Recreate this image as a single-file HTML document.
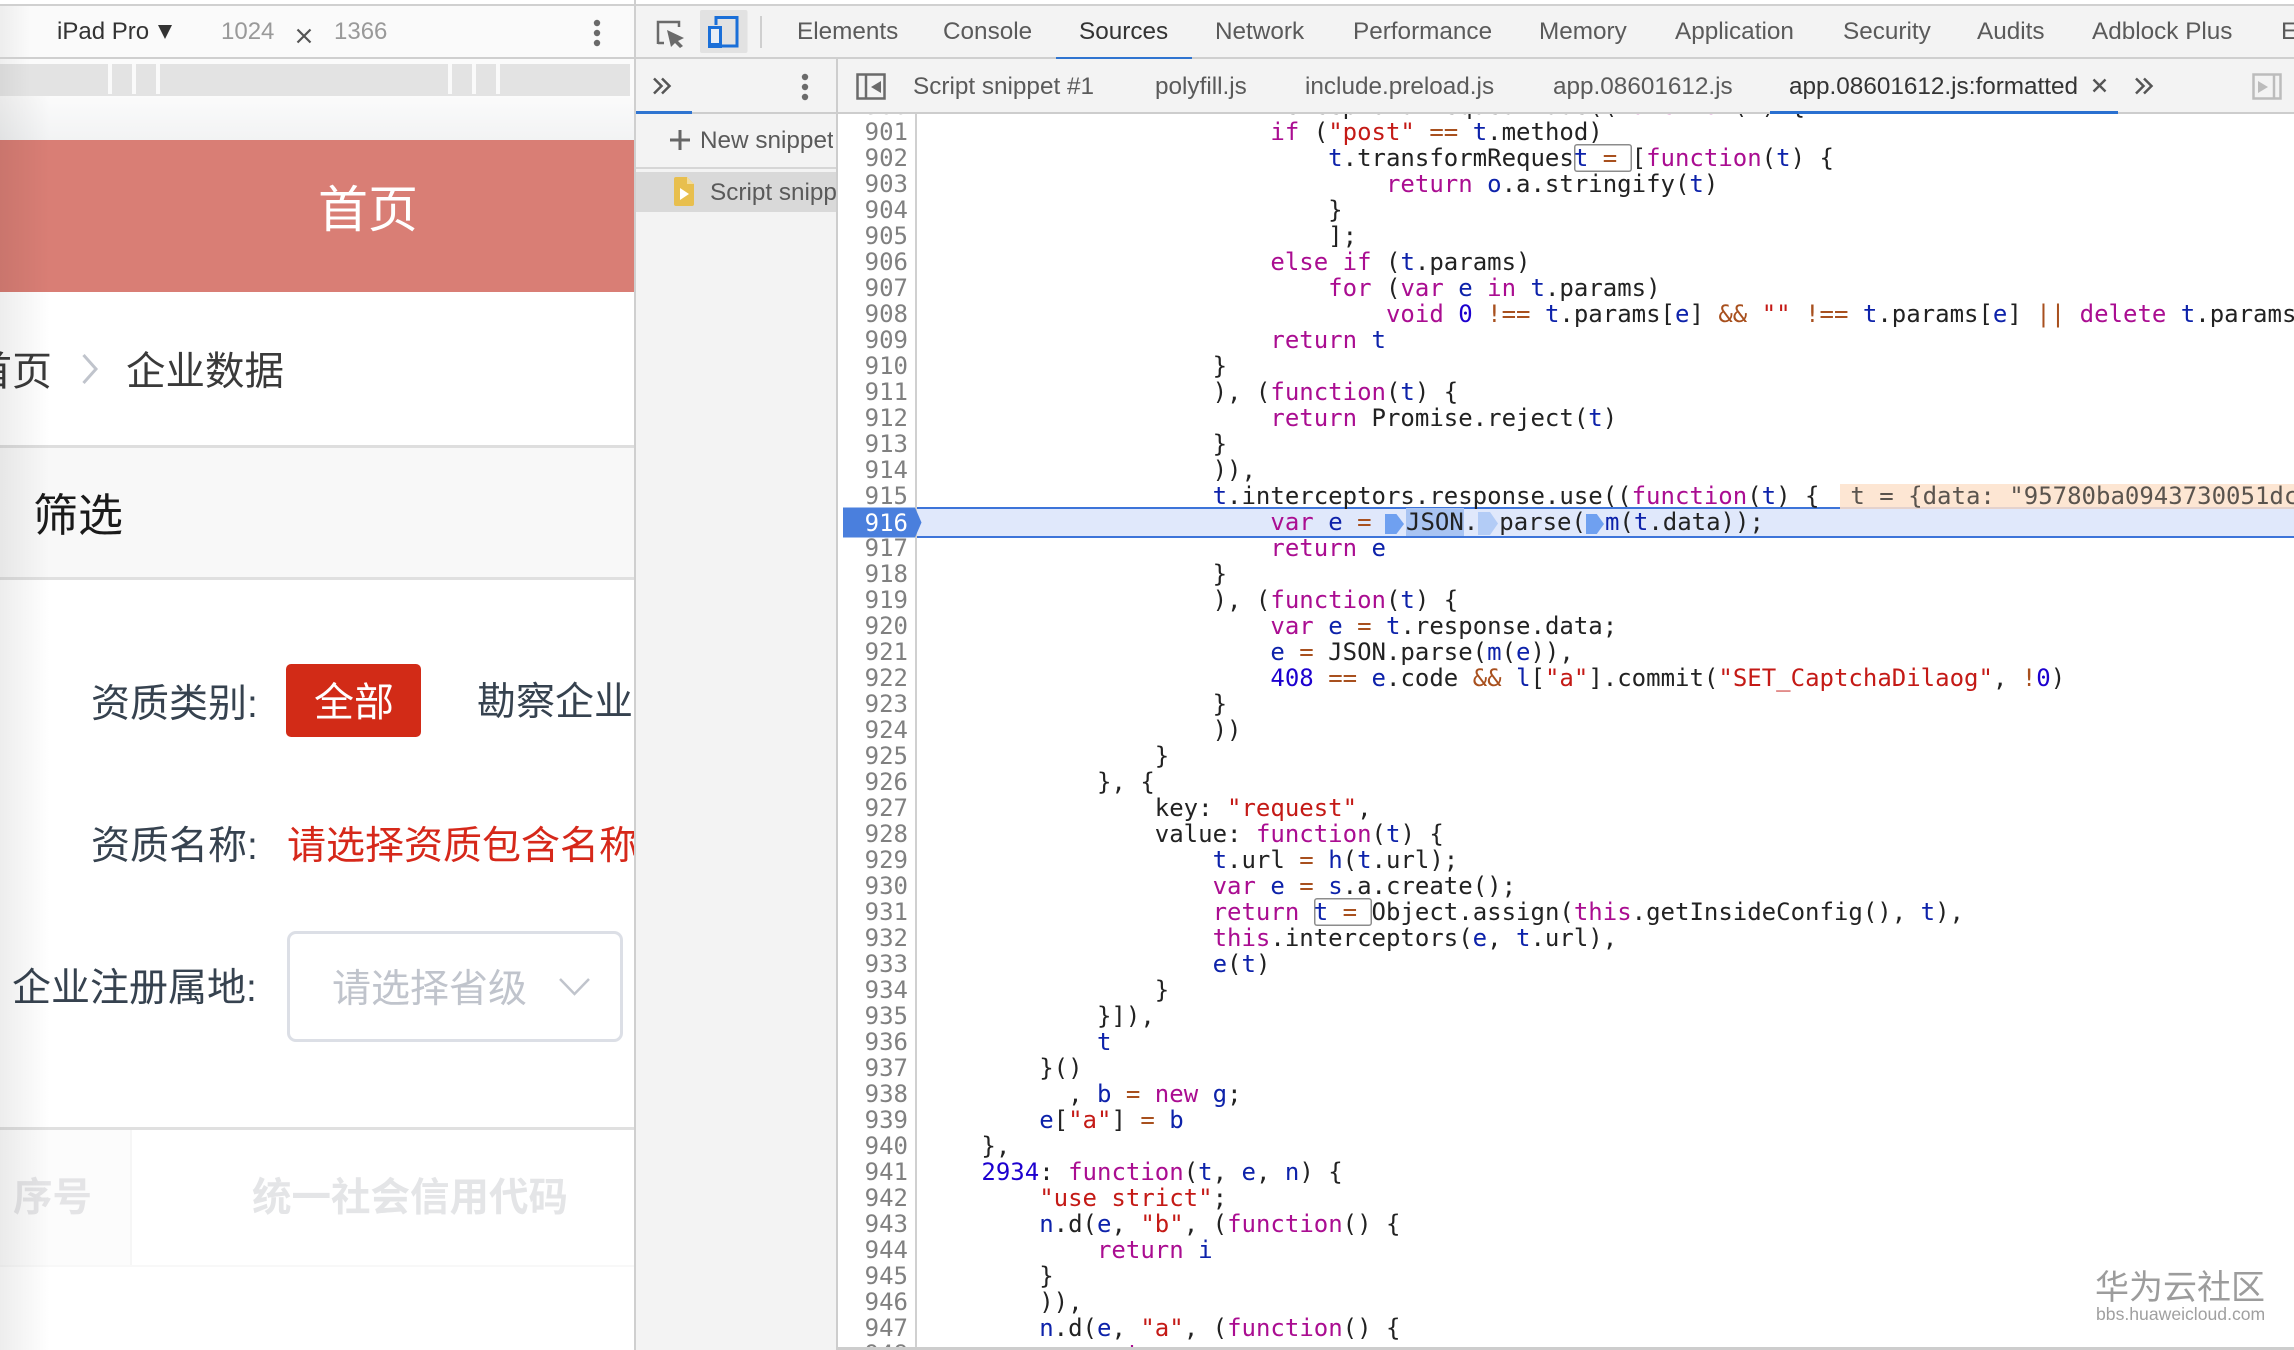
<!DOCTYPE html>
<html lang="zh-CN">
<head>
<meta charset="utf-8">
<title>DevTools</title>
<style>
html,body{margin:0;padding:0;background:#fff;}
body{position:relative;width:2294px;height:1350px;overflow:hidden;font-family:"Liberation Sans","Noto Sans CJK SC",sans-serif;}
.a{position:absolute;white-space:nowrap;}
.r{position:absolute;}
.t{position:absolute;white-space:nowrap;font-size:24.300px;line-height:30px;color:#5a5a5a;}
.cn{position:absolute;white-space:nowrap;line-height:50px;font-size:39px;color:#36424f;}
#code,#nums{position:absolute;top:93px;font-family:"DejaVu Sans Mono",monospace;font-size:24px;line-height:26px;white-space:pre;margin:0;}
#code{left:925px;color:#222;}
#nums{left:850px;width:58px;text-align:right;color:#808080;}
#codeclip{position:absolute;left:917px;top:114px;width:1377px;height:1233px;overflow:hidden;}
#numclip{position:absolute;left:840px;top:114px;width:75px;height:1233px;overflow:hidden;}
#codeclip #code{left:6.600px;top:-21px;}
#numclip #nums{left:10px;top:-21px;}
.k{color:#aa0d91}.v{color:#0d22aa}.o{color:#a8501e}.s{color:#c41a16}.n{color:#1c00cf}
.bx{box-shadow:inset 0 0 0 1.5px #8c8c8c;border-radius:3px;}
.gap{display:inline-block;height:0;}
</style>
</head>
<body>

<!-- left device panel -->
<div class="r" style="left:0;top:0;width:634px;height:1350px;background:#fff;overflow:hidden;">
  <div class="r" style="left:0;top:6px;width:634px;height:52px;background:#fafafa;"></div>
  <div class="r" style="left:0;top:59px;width:634px;height:37px;background:#fbfbfb;"></div>
  <div class="r" style="left:0;top:64px;width:630px;height:32px;background:#e3e3e3;"></div>
  <div class="r" style="left:108px;top:64px;width:4px;height:30px;background:#fafafa;"></div>
  <div class="r" style="left:132px;top:64px;width:4px;height:30px;background:#fafafa;"></div>
  <div class="r" style="left:156px;top:64px;width:4px;height:30px;background:#fafafa;"></div>
  <div class="r" style="left:448px;top:64px;width:4px;height:30px;background:#fafafa;"></div>
  <div class="r" style="left:472px;top:64px;width:4px;height:30px;background:#fafafa;"></div>
  <div class="r" style="left:496px;top:64px;width:4px;height:30px;background:#fafafa;"></div>
  <div class="r" style="left:0;top:96px;width:634px;height:44px;background:linear-gradient(#fbfbfb,#f2f3f4);"></div>

  <div class="r" style="left:0;top:140px;width:634px;height:152px;background:#d97e75;"></div>
  <div class="cn" style="left:318px;top:185px;font-size:50px;color:#fff;">首页</div>

  <div class="cn" style="left:-28px;top:347px;font-size:40px;color:#3a3a3a;">首页</div>
  <svg class="r" style="left:80px;top:352px;" width="20" height="34"><path d="M3.500 3 L16 17 L3.500 31" fill="none" stroke="#c0c4cc" stroke-width="3"/></svg>
  <div class="cn" style="left:126px;top:347px;font-size:39.500px;color:#3a3a3a;">企业数据</div>

  <div class="r" style="left:0;top:448px;width:634px;height:130px;background:#f8f8f8;"></div>
  <div class="r" style="left:0;top:445px;width:634px;height:3px;background:#dedede;"></div>
  <div class="r" style="left:0;top:577px;width:634px;height:3px;background:#e0e0e0;"></div>
  <div class="cn" style="left:33px;top:491px;font-size:45px;color:#1a1a1a;">筛选</div>

  <div class="cn" style="left:91px;top:680px;">资质类别:</div>
  <div class="r" style="left:286px;top:664px;width:135px;height:73px;background:#d22b17;border-radius:5px;"></div>
  <div class="cn" style="left:314px;top:678px;font-size:40px;color:#fff;">全部</div>
  <div class="cn" style="left:477px;top:678px;">勘察企业</div>

  <div class="cn" style="left:91px;top:822px;">资质名称:</div>
  <div class="cn" style="left:287px;top:822px;color:#d6281a;">请选择资质包含名称</div>

  <div class="cn" style="left:12px;top:964px;">企业注册属地:</div>
  <div class="r" style="left:287px;top:931px;width:330px;height:105px;border:3px solid #dcdfe6;border-radius:9px;background:#fff;"></div>
  <div class="cn" style="left:332px;top:965px;color:#c0c4cc;font-size:39px;">请选择省级</div>
  <svg class="r" style="left:558px;top:977px;" width="34" height="20"><path d="M2 2 L16.500 17 L31 2" fill="none" stroke="#c0c4cc" stroke-width="2.500"/></svg>

  <div class="r" style="left:0;top:1127px;width:634px;height:3px;background:#e0e0e0;"></div>
  <div class="r" style="left:0;top:1130px;width:130px;height:135px;background:#fcfcfc;"></div>
  <div class="r" style="left:130px;top:1130px;width:2px;height:135px;background:#f6f6f6;"></div>
  <div class="r" style="left:0;top:1265px;width:634px;height:2px;background:#f8f8f8;"></div>
  <div class="cn" style="left:13px;top:1173px;font-weight:700;font-size:39.500px;color:#e4e4e6;">序号</div>
  <div class="cn" style="left:252px;top:1173px;font-weight:700;font-size:39.500px;color:#e4e5e7;">统一社会信用代码</div>

  <div class="r" style="left:0;top:96px;width:50px;height:1254px;background:linear-gradient(90deg,rgba(0,0,0,.07),rgba(0,0,0,0));"></div>
  <div class="r" style="left:0;top:6px;width:30px;height:90px;background:linear-gradient(90deg,rgba(0,0,0,.05),rgba(0,0,0,0));"></div>

  <div class="r" style="left:0;top:4px;width:634px;height:2px;background:#d0d0d0;"></div>
  <div class="r" style="left:0;top:57px;width:634px;height:2px;background:#cfcfcf;"></div>

  <div class="t" style="left:57px;top:17px;font-size:24px;color:#333;">iPad Pro</div>
  <svg class="r" style="left:158px;top:25px;" width="14" height="14"><path d="M0 0H14L7 14Z" fill="#333"/></svg>
  <div class="t" style="left:221px;top:17px;font-size:24px;color:#999;">1024</div>
  <svg class="r" style="left:296px;top:28px;" width="16" height="16"><path d="M1.500 1.500L14.500 14.500M14.500 1.500L1.500 14.500" stroke="#555" stroke-width="2.200" fill="none"/></svg>
  <div class="t" style="left:334px;top:17px;font-size:24px;color:#999;">1366</div>
  <svg class="r" style="left:590px;top:18px;" width="14" height="30"><circle cx="7" cy="5" r="3.200" fill="#6a6a6a"/><circle cx="7" cy="15" r="3.200" fill="#6a6a6a"/><circle cx="7" cy="25" r="3.200" fill="#6a6a6a"/></svg>
</div>
<div class="r" style="left:634px;top:0;width:2px;height:1350px;background:#cfcfcf;"></div>

<!-- devtools top toolbar -->
<div class="r" style="left:636px;top:6px;width:1658px;height:51px;background:#f3f3f3;"></div>
<div class="r" style="left:636px;top:4px;width:1658px;height:2px;background:#d0d0d0;"></div>
<div class="r" style="left:636px;top:57px;width:1658px;height:2px;background:#cfcfcf;"></div>
<svg class="r" style="left:650px;top:8px;" width="110" height="50">
  <path d="M8 36V14H29V19" fill="none" stroke="#6a6a6a" stroke-width="2.500"/>
  <path d="M8 35H14" fill="none" stroke="#6a6a6a" stroke-width="2.500"/>
  <path d="M17 22L34 30L28 33L33 38L30 40L25 35L21 39Z" fill="#6a6a6a"/>
  <rect x="50" y="2" width="47.500" height="43" rx="2" fill="#e2e2e2"/>
  <path d="M66 17V9.500H87V38H70" fill="none" stroke="#1a6fd8" stroke-width="3"/>
  <rect x="59.500" y="19.500" width="11" height="19" fill="#e8eef6" stroke="#1a6fd8" stroke-width="3"/>
  <rect x="58" y="35" width="14" height="5" fill="#1a6fd8"/>
</svg>
<div class="r" style="left:760px;top:16px;width:2px;height:32px;background:#cfcfcf;"></div>

<div class="t" style="left:797px;top:17px;">Elements</div>
<div class="t" style="left:943px;top:17px;">Console</div>
<div class="t" style="left:1079px;top:17px;color:#333;">Sources</div>
<div class="r" style="left:1056px;top:57px;width:136px;height:3px;background:#2f74d0;"></div>
<div class="t" style="left:1215px;top:17px;">Network</div>
<div class="t" style="left:1353px;top:17px;">Performance</div>
<div class="t" style="left:1539px;top:17px;">Memory</div>
<div class="t" style="left:1675px;top:17px;">Application</div>
<div class="t" style="left:1843px;top:17px;">Security</div>
<div class="t" style="left:1977px;top:17px;">Audits</div>
<div class="t" style="left:2092px;top:17px;">Adblock Plus</div>
<div class="t" style="left:2281px;top:17px;">E</div>

<!-- second row + sidebar -->
<div class="r" style="left:636px;top:59px;width:200px;height:1291px;background:#f3f3f3;"></div>
<div class="r" style="left:838px;top:59px;width:1456px;height:53px;background:#f3f3f3;"></div>
<div class="r" style="left:636px;top:112px;width:1658px;height:2px;background:#cdcdcd;"></div>
<div class="r" style="left:636px;top:111px;width:56px;height:3px;background:#2f74d0;"></div>
<div class="r" style="left:836px;top:59px;width:2px;height:1291px;background:#cdcdcd;"></div>
<svg class="r" style="left:652px;top:76px;" width="22" height="20"><path d="M2 2.500L9.500 10L2 17.500M10 2.500L17.500 10L10 17.500" fill="none" stroke="#555" stroke-width="2.500"/></svg>
<svg class="r" style="left:798px;top:72px;" width="14" height="30"><circle cx="7" cy="5" r="3.200" fill="#6a6a6a"/><circle cx="7" cy="15" r="3.200" fill="#6a6a6a"/><circle cx="7" cy="25" r="3.200" fill="#6a6a6a"/></svg>

<svg class="r" style="left:670px;top:130px;" width="20" height="20"><path d="M0 10H20M10 0V20" stroke="#666" stroke-width="3"/></svg>
<div class="r" style="left:700px;top:125px;width:133px;height:32px;overflow:hidden;"><div class="t" style="left:0;top:1px;">New snippet</div></div>
<div class="r" style="left:636px;top:167px;width:200px;height:2px;background:#d6d6d6;"></div>
<div class="r" style="left:636px;top:172px;width:200px;height:40px;background:#d9d9d9;"></div>
<svg class="r" style="left:674px;top:177px;" width="20" height="29"><path d="M2 0H13L20 7V27a2 2 0 0 1-2 2H2a2 2 0 0 1-2-2V2a2 2 0 0 1 2-2Z" fill="#e8bf4e"/><path d="M13 0L20 7H13Z" fill="#f3dc9b"/><path d="M6 11L15 17L6 23Z" fill="#fff"/></svg>
<div class="r" style="left:710px;top:177px;width:126px;height:32px;overflow:hidden;"><div class="t" style="left:0;top:1px;">Script snippet #1</div></div>

<svg class="r" style="left:856px;top:73px;" width="31" height="27"><rect x="1.500" y="1.500" width="27" height="24" fill="none" stroke="#6a6a6a" stroke-width="2.500"/><path d="M10 1.500V25.500" stroke="#6a6a6a" stroke-width="2.500"/><path d="M25 8V20L15 14Z" fill="#6a6a6a"/></svg>
<div class="t" style="left:913px;top:72px;">Script snippet #1</div>
<div class="t" style="left:1155px;top:72px;">polyfill.js</div>
<div class="t" style="left:1305px;top:72px;">include.preload.js</div>
<div class="t" style="left:1553px;top:72px;">app.08601612.js</div>
<div class="t" style="left:1789px;top:72px;color:#333;">app.08601612.js:formatted</div>
<svg class="r" style="left:2092px;top:78px;" width="15" height="15"><path d="M1.500 1.500L13.500 13.500M13.500 1.500L1.500 13.500" stroke="#555" stroke-width="2.400" fill="none"/></svg>
<div class="r" style="left:1770px;top:111px;width:348px;height:3px;background:#2a70d0;"></div>
<svg class="r" style="left:2134px;top:76px;" width="22" height="20"><path d="M2 2.500L9.500 10L2 17.500M10 2.500L17.500 10L10 17.500" fill="none" stroke="#555" stroke-width="2.500"/></svg>
<svg class="r" style="left:2252px;top:73px;" width="31" height="27"><rect x="1.500" y="1.500" width="27" height="24" fill="none" stroke="#bcbcbc" stroke-width="2.500"/><path d="M22 1.500V25.500" stroke="#bcbcbc" stroke-width="2.500"/><path d="M6 8V20L16 14Z" fill="#bcbcbc"/></svg>

<!-- editor -->
<div class="r" style="left:915px;top:114px;width:2px;height:1236px;background:#d0d0d0;"></div>
<div id="numclip"><pre id="nums">900
901
902
903
904
905
906
907
908
909
910
911
912
913
914
915
<span style="color:#fff">916</span>
917
918
919
920
921
922
923
924
925
926
927
928
929
930
931
932
933
934
935
936
937
938
939
940
941
942
943
944
945
946
947
948</pre></div>

<div class="r" style="left:917px;top:507px;width:1377px;height:31px;background:#e0e8fb;border-top:2px solid #3d74d9;border-bottom:2px solid #3d74d9;box-sizing:border-box;"></div>
<div class="r" style="left:1840px;top:484px;width:454px;height:25px;background:#fde6d3;"></div>
<div class="r" style="left:1840px;top:507px;width:454px;height:2px;background:#e4d2cd;"></div>
<svg class="r" style="left:843px;top:507px;" width="80" height="31"><path d="M0 0.500H72L78.500 15.500L72 30.500H0Z" fill="#4a7fdd"/></svg>
<div class="a" style="left:850px;top:510px;width:58px;text-align:right;font-family:'DejaVu Sans Mono',monospace;font-size:24px;line-height:26px;color:#fff;">916</div>

<div class="r" style="left:1385px;top:514px;width:19px;height:20px;background:#6fa0f0;clip-path:polygon(0 0,60% 0,100% 50%,60% 100%,0 100%);"></div>
<div class="r" style="left:1478px;top:512px;width:20px;height:23px;background:#b3ccf6;clip-path:polygon(0 0,60% 0,100% 50%,60% 100%,0 100%);"></div>
<div class="r" style="left:1586px;top:514px;width:18px;height:20px;background:#6fa0f0;clip-path:polygon(0 0,60% 0,100% 50%,60% 100%,0 100%);"></div>

<div id="codeclip"><pre id="code">                    <span class="v">t</span>.interceptors.request.use((<span class="k">function</span>(<span class="v">t</span>) {
                        <span class="k">if</span> (<span class="s">"post"</span> <span class="o">==</span> <span class="v">t</span>.method)
                            <span class="v">t</span>.transformReques<span class="bx"><span class="v">t</span> <span class="o">=</span> </span>[<span class="k">function</span>(<span class="v">t</span>) {
                                <span class="k">return</span> <span class="v">o</span>.a.stringify(<span class="v">t</span>)
                            }
                            ];
                        <span class="k">else</span> <span class="k">if</span> (<span class="v">t</span>.params)
                            <span class="k">for</span> (<span class="k">var</span> <span class="v">e</span> <span class="k">in</span> <span class="v">t</span>.params)
                                <span class="k">void</span> <span class="n">0</span> <span class="o">!==</span> <span class="v">t</span>.params[<span class="v">e</span>] <span class="o">&amp;&amp;</span> <span class="s">""</span> <span class="o">!==</span> <span class="v">t</span>.params[<span class="v">e</span>] <span class="o">||</span> <span class="k">delete</span> <span class="v">t</span>.params[<span class="v">e</span>];
                        <span class="k">return</span> <span class="v">t</span>
                    }
                    ), (<span class="k">function</span>(<span class="v">t</span>) {
                        <span class="k">return</span> Promise.reject(<span class="v">t</span>)
                    }
                    )),
                    <span class="v">t</span>.interceptors.response.use((<span class="k">function</span>(<span class="v">t</span>) {  <span class="gap" style="width:2px"></span><span style="color:#5a544e">t = {data: "95780ba0943730051dc</span>
                        <span class="k">var</span> <span class="v">e</span> <span class="o">=</span> <span class="gap" style="width:20px"></span><span style="background:#a9c4f2">JSON</span>.<span class="gap" style="width:21px"></span>parse(<span class="gap" style="width:19px"></span><span class="v">m</span>(<span class="v">t</span>.data));
                        <span class="k">return</span> <span class="v">e</span>
                    }
                    ), (<span class="k">function</span>(<span class="v">t</span>) {
                        <span class="k">var</span> <span class="v">e</span> <span class="o">=</span> <span class="v">t</span>.response.data;
                        <span class="v">e</span> <span class="o">=</span> JSON.parse(<span class="v">m</span>(<span class="v">e</span>)),
                        <span class="n">408</span> <span class="o">==</span> <span class="v">e</span>.code <span class="o">&amp;&amp;</span> <span class="v">l</span>[<span class="s">"a"</span>].commit(<span class="s">"SET_CaptchaDilaog"</span>, <span class="o">!</span><span class="n">0</span>)
                    }
                    ))
                }
            }, {
                key: <span class="s">"request"</span>,
                value: <span class="k">function</span>(<span class="v">t</span>) {
                    <span class="v">t</span>.url <span class="o">=</span> <span class="v">h</span>(<span class="v">t</span>.url);
                    <span class="k">var</span> <span class="v">e</span> <span class="o">=</span> <span class="v">s</span>.a.create();
                    <span class="k">return</span> <span class="bx"><span class="v">t</span> <span class="o">=</span> </span>Object.assign(<span class="k">this</span>.getInsideConfig(), <span class="v">t</span>),
                    <span class="k">this</span>.interceptors(<span class="v">e</span>, <span class="v">t</span>.url),
                    <span class="v">e</span>(<span class="v">t</span>)
                }
            }]),
            <span class="v">t</span>
        }()
          , <span class="v">b</span> <span class="o">=</span> <span class="k">new</span> <span class="v">g</span>;
        <span class="v">e</span>[<span class="s">"a"</span>] <span class="o">=</span> <span class="v">b</span>
    },
    <span class="n">2934</span>: <span class="k">function</span>(<span class="v">t</span>, <span class="v">e</span>, <span class="v">n</span>) {
        <span class="s">"use strict"</span>;
        <span class="v">n</span>.d(<span class="v">e</span>, <span class="s">"b"</span>, (<span class="k">function</span>() {
            <span class="k">return</span> <span class="v">i</span>
        }
        )),
        <span class="v">n</span>.d(<span class="v">e</span>, <span class="s">"a"</span>, (<span class="k">function</span>() {
            <span class="k">return</span> <span class="v">r</span></pre></div>

<div class="r" style="left:838px;top:1347px;width:1456px;height:3px;background:#cdcdcd;"></div>

<div class="a" style="left:2095px;top:1269px;font-size:34px;line-height:38px;color:#9c9c9c;">华为云社区</div>
<div class="a" style="left:2096px;top:1303px;font-size:17.600px;line-height:22px;color:#a0a0a0;">bbs.huaweicloud.com</div>

</body>
</html>
